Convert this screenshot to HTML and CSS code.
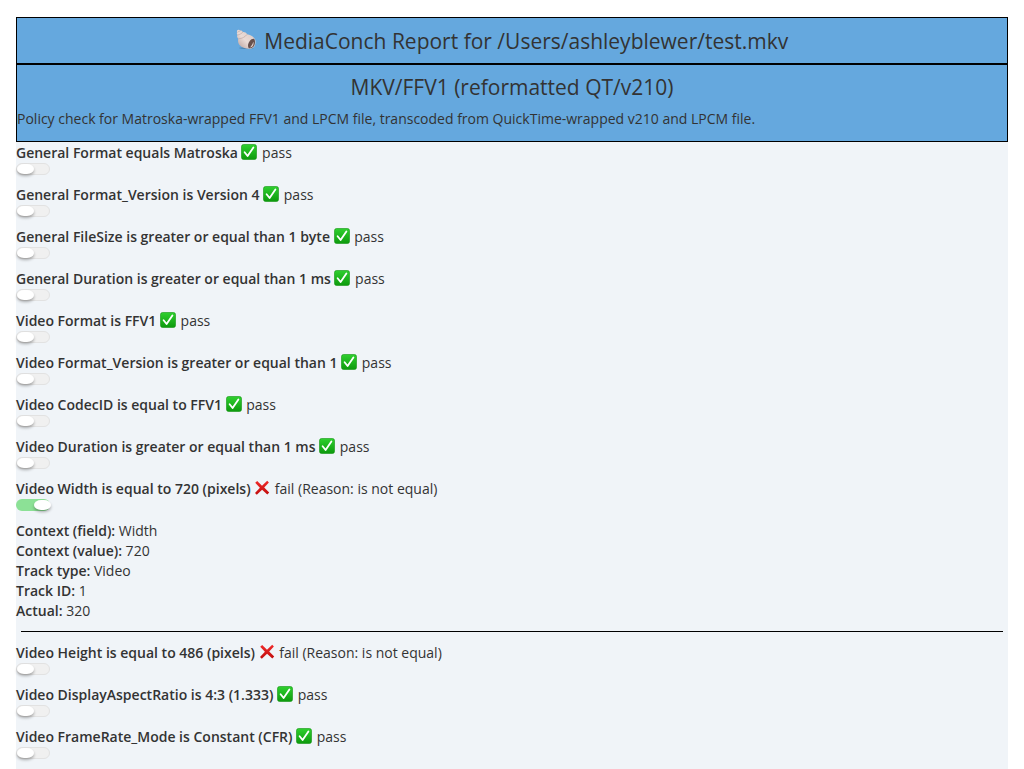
FILE: index.html
```html
<!DOCTYPE html>
<html lang="en">
<head>
<meta charset="utf-8">
<title>MediaConch Report</title>
<link rel="stylesheet" href="styles.css">
</head>
<body>
<svg class="defs" width="0" height="0" aria-hidden="true">
  <defs>
    <linearGradient id="green" x1="0" y1="0" x2="0" y2="1"><stop offset="0" stop-color="#2fd02f"/><stop offset="1" stop-color="#0d9a0d"/></linearGradient>
    <linearGradient id="red" x1="0" y1="0" x2="0" y2="1"><stop offset="0" stop-color="#f02a2a"/><stop offset="1" stop-color="#c00d0d"/></linearGradient>
    <linearGradient id="shell" x1="0" y1="1" x2="1" y2="0"><stop offset="0" stop-color="#b59c98"/><stop offset=".45" stop-color="#eadbd6"/><stop offset="1" stop-color="#d9c6c0"/></linearGradient>
    <symbol id="pass" viewBox="0 0 16 16"><rect x=".5" y=".5" width="15" height="15" rx="2" fill="url(#green)" stroke="#129512" stroke-width=".6"/><path d="M3.6 8.3 6.6 12 12.4 3.4" fill="none" stroke="#fff" stroke-width="1.8" stroke-linecap="round" stroke-linejoin="round"/></symbol>
    <symbol id="fail" viewBox="0 0 16 16"><path d="M1.200 2.800 3.200 1 8 5.700 13.200.8 14.900 2.500 10.200 7.600 15.200 12.400 13.300 14.500 8.100 9.800 2.800 14.700 1 12.900 5.900 7.800Z" fill="url(#red)"/></symbol>
  </defs>
</svg>
<main class="report">
  <header class="title">
    <h1 class="heading"><svg class="shell" viewBox="0 0 22 22" aria-hidden="true"><ellipse cx="11" cy="20" rx="8" ry="1" fill="#4e87b5"/><path d="M1.2 1.5C2 .2 3.8.8 4.6 1.6c1.2-.1 2.2.6 2.6 1.5 2.2-.1 3.6.8 4.4 2.4 3 .6 5.4 1.7 7.4 3.8 2 2.2 1.7 5.2.8 7.6-.7 1.8-2.2 3.4-4.6 3.7-4.4.4-8.7-.8-11.5-3.8-1.6-1.8-1.8-4.4-1.3-6.5C1 9 .8 7.400 1.500 6.200.8 5.200.7 4.200 1.200 3.300c-.3-.5-.3-1.200 0-1.800Z" fill="url(#shell)"/><path d="M1.300 3.500 4.700 1.700M1.500 6.300C3.600 6 5.800 4.900 7.200 3.200M2.500 10.300C6 10.200 9.500 8.500 11.600 5.600" fill="none" stroke="#b79f9a" stroke-width=".6"/><path d="M13.200 19.800c-1.200-2-.6-5.300 1.200-7.300 1.300-1.500 3.400-2.600 4.800-2 1.200 2 .8 5.400-.3 7.400-1 1.700-3.500 3-5.700 1.900Z" fill="#67504d"/><path d="M14.400 19.400c1.600-1.200 3-3.600 3.700-6.100 1 2.300-.2 5.900-3.700 6.100Z" fill="#ddcbc6"/></svg> MediaConch Report for /Users/ashleyblewer/test.mkv</h1>
  </header>
  <section class="policy">
    <h2 class="heading">MKV/FFV1 (reformatted QT/v210)</h2>
    <p class="description">Policy check for Matroska-wrapped FFV1 and LPCM file, transcoded from QuickTime-wrapped v210 and LPCM file.</p>
  </section>
  <section class="checks">
    <div class="check"><label class="result" for="c1"><b>General Format equals Matroska</b> <svg class="mark"><use href="#pass"/></svg> pass</label><input class="toggle" type="checkbox" id="c1"></div>
    <div class="check"><label class="result" for="c2"><b>General Format_Version is Version 4</b> <svg class="mark"><use href="#pass"/></svg> pass</label><input class="toggle" type="checkbox" id="c2"></div>
    <div class="check"><label class="result" for="c3"><b>General FileSize is greater or equal than 1 byte</b> <svg class="mark"><use href="#pass"/></svg> pass</label><input class="toggle" type="checkbox" id="c3"></div>
    <div class="check"><label class="result" for="c4"><b>General Duration is greater or equal than 1 ms</b> <svg class="mark"><use href="#pass"/></svg> pass</label><input class="toggle" type="checkbox" id="c4"></div>
    <div class="check"><label class="result" for="c5"><b>Video Format is FFV1</b> <svg class="mark"><use href="#pass"/></svg> pass</label><input class="toggle" type="checkbox" id="c5"></div>
    <div class="check"><label class="result" for="c6"><b>Video Format_Version is greater or equal than 1</b> <svg class="mark"><use href="#pass"/></svg> pass</label><input class="toggle" type="checkbox" id="c6"></div>
    <div class="check"><label class="result" for="c7"><b>Video CodecID is equal to FFV1</b> <svg class="mark"><use href="#pass"/></svg> pass</label><input class="toggle" type="checkbox" id="c7"></div>
    <div class="check"><label class="result" for="c8"><b>Video Duration is greater or equal than 1 ms</b> <svg class="mark"><use href="#pass"/></svg> pass</label><input class="toggle" type="checkbox" id="c8"></div>
    <div class="check"><label class="result" for="c9"><b>Video Width is equal to 720 (pixels)</b> <svg class="mark"><use href="#fail"/></svg> fail (Reason: is not equal)</label><input class="toggle" type="checkbox" id="c9" checked></div>
    <div class="details">
      <div><b>Context (field):</b> Width</div>
      <div><b>Context (value):</b> 720</div>
      <div><b>Track type:</b> Video</div>
      <div><b>Track ID:</b> 1</div>
      <div><b>Actual:</b> 320</div>
    </div>
    <hr class="divider">
    <div class="check"><label class="result" for="c10"><b>Video Height is equal to 486 (pixels)</b> <svg class="mark"><use href="#fail"/></svg> fail (Reason: is not equal)</label><input class="toggle" type="checkbox" id="c10"></div>
    <div class="check"><label class="result" for="c11"><b>Video DisplayAspectRatio is 4:3 (1.333)</b> <svg class="mark"><use href="#pass"/></svg> pass</label><input class="toggle" type="checkbox" id="c11"></div>
    <div class="check"><label class="result" for="c12"><b>Video FrameRate_Mode is Constant (CFR)</b> <svg class="mark"><use href="#pass"/></svg> pass</label><input class="toggle" type="checkbox" id="c12"></div>
  </section>
</main>
</body>
</html>
```
FILE: styles.css
```css
* { box-sizing: border-box; }
body {
  margin: 0;
  padding: 17px 16px 0;
  background: #fff;
  color: #333;
  font: 14px/20px "Open Sans", sans-serif;
}
b { font-weight: 600; }
.defs { display: block; }
.report { background: #f0f4f8; }
.title, .policy {
  background: #65a8de;
  border: 1px solid #000;
}
.title { padding: 8px 0 7px; }
.policy { padding: 7px 0 12px; }
.heading {
  margin: 0;
  text-align: center;
  font-size: 21px;
  line-height: 30px;
  font-weight: 400;
}
.shell {
  width: 21px;
  height: 21px;
  margin-right: 2px;
  vertical-align: -1px;
}
.description { margin: 7px 0 0; }
.checks { padding-top: 1px; }
.check {
  display: flex;
  flex-direction: column;
  align-items: flex-start;
  padding-bottom: 10px;
}
.mark {
  width: 16px;
  height: 16px;
  margin-right: 1px;
  vertical-align: -2px;
}
.toggle {
  appearance: none;
  display: flex;
  width: 34px;
  height: 12px;
  margin: 0;
  border: 1px solid #e2e2e2;
  border-radius: 6px;
  background: #f0f0f0;
}
.toggle::before {
  content: "";
  width: 17px;
  height: 10px;
  border-radius: 50% / 6px;
  background: #fff;
  box-shadow: 0 2px 3px rgba(0, 0, 0, .3);
}
.toggle:checked {
  justify-content: flex-end;
  border-color: #8ce196;
  border-right-color: transparent;
  background: #8ce196;
}
.toggle:checked::before { margin-right: -2px; }
.divider {
  margin: 10px 5px 11px;
  border: 0;
  border-top: 1px solid #000;
}
```
